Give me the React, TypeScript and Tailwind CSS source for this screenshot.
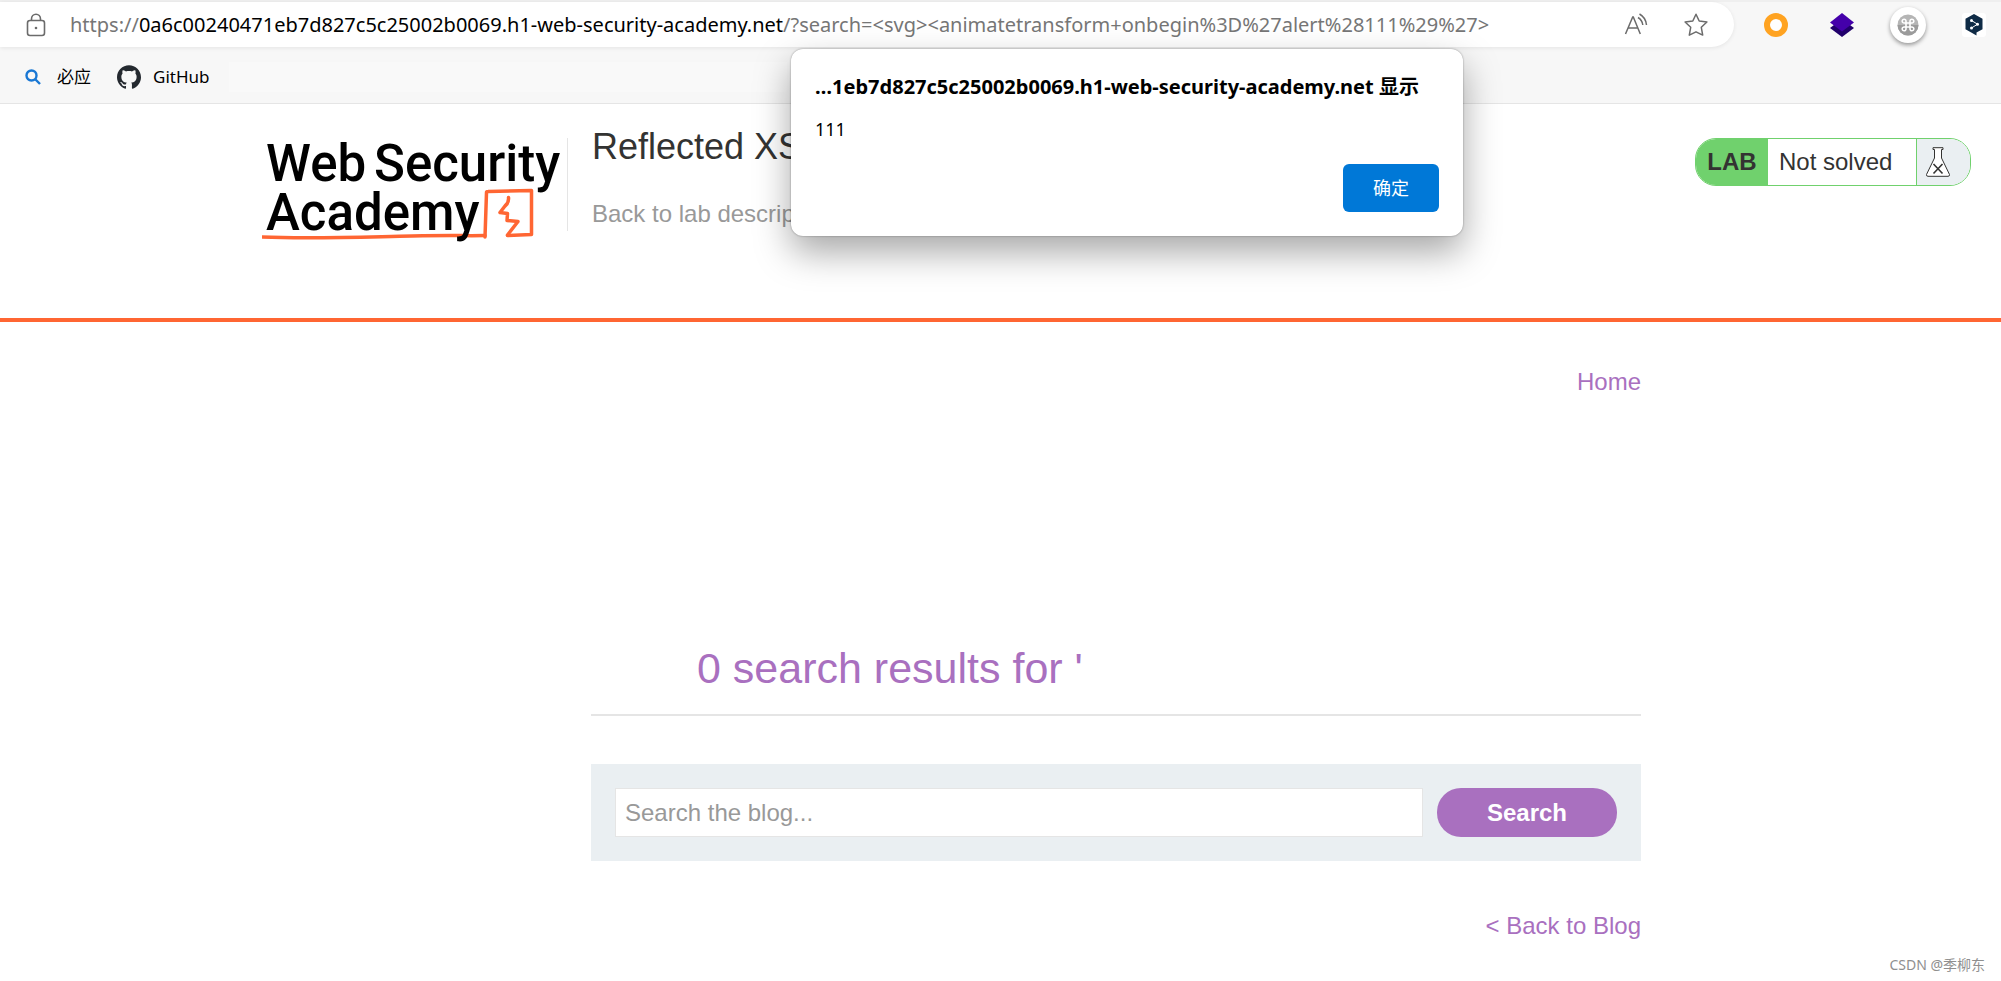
import { useState } from "react";
import { SiGithub } from "react-icons/si";

const dialogHost = "…1eb7d827c5c25002b0069.h1-web-security-academy.net";

function LockIcon() {
  return (
    <svg className="w-5 h-6" viewBox="0 0 20 24" fill="none" stroke="#6b6b6b" strokeWidth="1.6">
      <rect x="1.5" y="7.5" width="17" height="15" rx="2.5" />
      <path d="M5.5 7.5V6a4.5 4.8 0 0 1 9 0v1.5" />
      <circle cx="10" cy="15" r="1.3" fill="#6b6b6b" stroke="none" />
    </svg>
  );
}

function ReadAloudIcon() {
  return (
    <svg className="w-6 h-6" viewBox="0 0 24 24" fill="none" stroke="#6b6b6b" strokeWidth="1.5">
      <path d="M1.5 21 8.700 4h.6l7 17M4.200 15h9.600" />
      <path d="M14 4.500a10 10 0 0 1 4.800 7.500" />
      <path d="M15.500 1a14 14 0 0 1 7 11" />
    </svg>
  );
}

function StarIcon() {
  return (
    <svg className="w-6 h-6" viewBox="0 0 24 24" fill="none" stroke="#6b6b6b" strokeWidth="1.5" strokeLinejoin="round">
      <path d="M12 1.200 15.200 8l7.700 1-5.600 5.300 1.400 7.800L12 18.800l-6.700 3.300 1.400-7.800L1.100 9l7.700-1z" />
    </svg>
  );
}

function RingIcon() {
  return (
    <svg className="w-6 h-6" viewBox="0 0 24 24">
      <circle cx="12" cy="12" r="9" fill="white" stroke="#ffa321" strokeWidth="6" />
    </svg>
  );
}

function LayersIcon() {
  return (
    <svg className="w-6 h-6" viewBox="0 0 24 24">
      <path d="M0 15 4 12h16l4 3-12 9z" fill="#21006b" />
      <path d="M12 0 24 9.500 12 18.500 0 9.500z" fill="#4400aa" />
    </svg>
  );
}

function CommandIcon() {
  return (
    <svg className="w-[22px] h-[22px]" viewBox="0 0 22 22">
      <circle cx="11" cy="11" r="10.500" fill="#b5b5b5" />
      <path d="M.5 11a10.500 10.500 0 0 0 21 0z" fill="#9b9b9b" />
      <path
        d="M9 9h4v4H9zM9 9H7.200a1.900 1.900 0 1 1 1.800-1.800zM13 9h1.800a1.900 1.900 0 1 0-1.800-1.800zM9 13H7.200a1.900 1.900 0 1 0 1.800 1.800zM13 13h1.800a1.900 1.900 0 1 1-1.800 1.800z"
        fill="none"
        stroke="white"
        strokeWidth="1.600"
      />
    </svg>
  );
}

function TranslateIcon() {
  return (
    <svg className="w-6 h-6" viewBox="0 0 24 24">
      <rect width="24" height="24" rx="3" fill="white" />
      <path d="M12 1 20.500 5.800v10.400L14.500 19.500V22.500L3.500 16.200V5.800z" fill="#0f2b46" />
      <path d="m9.500 7.500 6 3.700-6 3.800" fill="none" stroke="white" strokeWidth="1" />
      <circle cx="9.500" cy="7.500" r="1.500" fill="white" />
      <circle cx="15.500" cy="11.200" r="1.500" fill="white" />
      <circle cx="9.500" cy="15" r="1.500" fill="white" />
    </svg>
  );
}

function BingIcon() {
  return (
    <svg className="w-4 h-4" viewBox="0 0 16 16" fill="none" stroke="#1977d4" strokeWidth="2.400">
      <circle cx="6.500" cy="6.500" r="5" />
      <path d="m10 10 5 5" />
    </svg>
  );
}

function AcademyLogo() {
  return (
    <svg className="w-[304px] h-[124px]" viewBox="0 -16 304 124" role="img" aria-label="Web Security Academy">
      <path d="M0 99C50 101 100 99 150 98S200 98 223 97.500" fill="none" stroke="#ff6633" strokeWidth="3.500" strokeLinecap="round" />
      <path d="M223 99 224.500 54.500Q224.500 53.500 226 53.500L269.500 52.500 269.500 96.500 245.500 97.500" fill="none" stroke="#ff6633" strokeWidth="3.500" strokeLinejoin="round" strokeLinecap="round" />
      <path d="M246.500 59.500Q247 65 243 68L238 74.500 245.500 75.500 245 82.500 256 83.500 245.500 97" fill="none" stroke="#ff6633" strokeWidth="3.500" strokeLinejoin="round" strokeLinecap="round" />
      <g fontFamily="Roboto, sans-serif" fontWeight="500" fontSize="51" fill="black">
        <text x="4" y="43">Web</text>
        <text x="112" y="43">Security</text>
        <text x="4" y="92">Academy</text>
      </g>
    </svg>
  );
}

function FlaskIcon() {
  return (
    <svg className="w-6 h-[30px]" viewBox="0 0 24 30" fill="none" stroke="#333332">
      <path d="M7 .7h10v1.800h-1.500v8.500l8 16.500q.3 1.800-1.500 1.800H2Q.2 29.300.5 27.500L8.500 11V2.500H7z" fill="white" strokeWidth="1" />
      <path d="m7.500 17 9 9.500M16.500 17l-9 9.500" strokeWidth="1.600" />
    </svg>
  );
}

export default function App() {
  const [open, setOpen] = useState(true);
  const [query, setQuery] = useState("");

  return (
    <div className="relative min-h-screen overflow-hidden bg-white font-['Liberation_Sans',Arial,sans-serif] text-2xl text-[#333332]">
      {/* browser toolbar */}
      <div className="border-b border-[#e5e5e5] bg-[#f7f7f7] font-['Noto_Sans','Noto_Sans_CJK_SC',sans-serif]">
        <div className="flex items-center border-t-2 border-[#efefef] pr-[9px]">
          <div className="flex h-[45px] min-w-0 flex-1 items-center rounded-r-full rounded-l-3xl bg-white px-[26px] shadow-[0_1px_4px_rgba(0,0,0,0.08)]">
            <LockIcon />
            <div role="textbox" aria-label="Address" className="ml-6 flex-1 truncate text-xl text-[#767676]">
              https://
              <span className="text-black">0a6c00240471eb7d827c5c25002b0069.h1-web-security-academy.net</span>
              /?search=&lt;svg&gt;&lt;animatetransform+onbegin%3D%27alert%28111%29%27&gt;
            </div>
            <div className="flex gap-9">
              <button aria-label="Read aloud">
                <ReadAloudIcon />
              </button>
              <button aria-label="Add to favorites">
                <StarIcon />
              </button>
            </div>
          </div>
          <div className="ml-6 flex items-center gap-[30px]">
            <button aria-label="Ring" className="flex size-9 items-center justify-center">
              <RingIcon />
            </button>
            <button aria-label="Layers" className="flex size-9 items-center justify-center">
              <LayersIcon />
            </button>
            <button
              aria-label="Shortcuts"
              className="flex size-9 items-center justify-center rounded-full bg-white shadow-[0_2px_4px_rgba(0,0,0,0.4)]"
            >
              <CommandIcon />
            </button>
            <button aria-label="Translate" className="flex size-9 items-center justify-center">
              <TranslateIcon />
            </button>
          </div>
        </div>
        <div className="flex h-14 items-center pt-2 pb-1 pl-[25px] text-[17px] text-black">
          <a href="#" className="flex items-center gap-4">
            <BingIcon />
            必应
          </a>
          <a href="#" className="ml-[26px] flex items-center gap-3">
            <SiGithub className="size-6 text-[#24292f]" />
            GitHub
          </a>
          <div className="ml-5 h-[30px] w-[558px] bg-[#f9f9f9]" />
        </div>
      </div>

      {/* lab header */}
      <header className="flex h-[218px] items-start border-b-4 border-[#ff6633] pr-[30px] pl-[262px]">
        <div className="mt-[18px]">
          <AcademyLogo />
        </div>
        <div className="mt-[34px] ml-px h-[93px] border-l border-[#e5e5e5]" />
        <div className="mt-4 ml-6 flex-1">
          <h2 className="text-4xl leading-[54px]">Reflected XSS with some SVG markup allowed</h2>
          <a href="#" className="mt-[22px] block leading-9 text-[#999]">
            Back to lab description
          </a>
        </div>
        <div className="mt-[34px] flex h-12 overflow-hidden rounded-[21px] border border-[#70d16d]">
          <span className="flex w-[72px] items-center justify-center bg-[#70d16d] font-bold">LAB</span>
          <span className="flex w-[149px] items-center border-r border-[#70d16d] pl-[11px]">Not solved</span>
          <span className="flex w-[53px] items-center bg-[#eaeff2] pl-[9px]">
            <FlaskIcon />
          </span>
        </div>
      </header>

      {/* blog */}
      <main className="pr-[360px] pl-[591px] text-[#a970bf]">
        <nav className="pt-[42px] text-right leading-9">
          <a href="#">Home</a>
        </nav>
        <h1 className="mt-[236px] pl-[106px] text-[43px] leading-[64px]">0 search results for '</h1>
        <hr className="mt-[14px] border-t-2 border-[#e5e5e5]" />
        <form
          className="mt-12 flex gap-[14px] bg-[#eaeff2] p-6"
          onSubmit={(e) => e.preventDefault()}
        >
          <input
            type="text"
            aria-label="Search the blog"
            value={query}
            onChange={(e) => setQuery(e.target.value)}
            placeholder="Search the blog..."
            className="h-[49px] min-w-0 flex-1 border border-[#e5e5e5] bg-white px-[9px] text-[#333332] placeholder:text-[#999]"
          />
          <button type="submit" className="w-[180px] rounded-3xl bg-[#a970bf] font-bold text-white">
            Search
          </button>
        </form>
        <div className="mt-[47px] text-right leading-9">
          <a href="#">&lt; Back to Blog</a>
        </div>
      </main>

      {open && (
        <div
          role="alertdialog"
          className="absolute top-[49px] left-[791px] w-[672px] rounded-xl bg-white p-6 font-['Noto_Sans','Noto_Sans_CJK_SC',sans-serif] text-lg text-black shadow-[0_0_2px_rgba(0,0,0,0.4),0_16px_36px_rgba(0,0,0,0.35)]"
        >
          <h3 className="text-xl leading-7 font-bold whitespace-nowrap">{dialogHost} 显示</h3>
          <p className="mt-4 leading-6">111</p>
          <div className="mt-[23px] flex justify-end">
            <button onClick={() => setOpen(false)} className="h-12 w-24 rounded-md bg-[#0078d7] text-white">
              确定
            </button>
          </div>
        </div>
      )}

      <div className="absolute right-4 bottom-1 font-['Noto_Sans','Noto_Sans_CJK_SC',sans-serif] text-sm leading-6 text-[#8f8f8f]">
        CSDN @季柳东
      </div>
    </div>
  );
}
